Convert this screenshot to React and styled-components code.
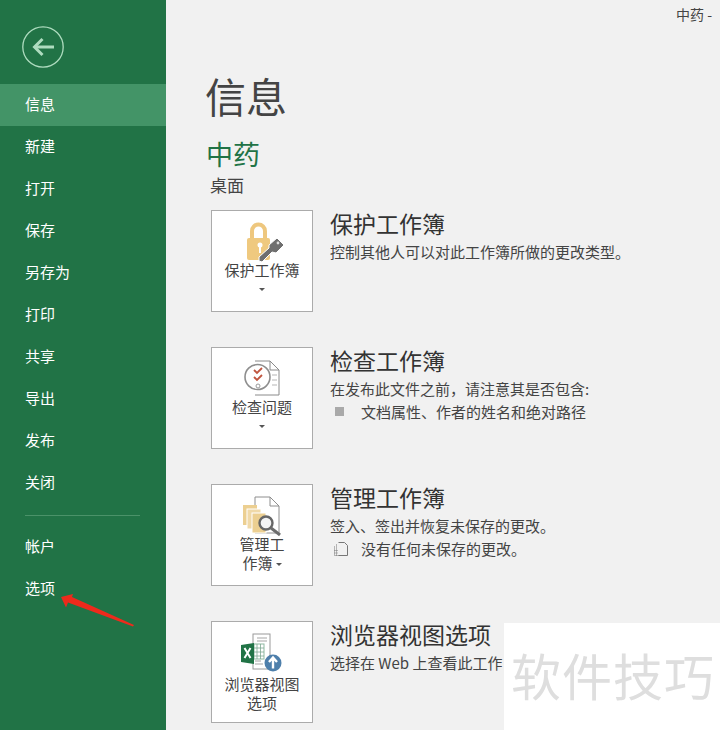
import React from "react";
import styled, { createGlobalStyle } from "styled-components";

const cjk = `"Noto Sans CJK SC", "Noto Sans", sans-serif`;

const GlobalStyle = createGlobalStyle`
  html, body {
    margin: 0;
    padding: 0;
    height: 730px;
    overflow: hidden;
    background: #f1f1f1;
  }
  * {
    box-sizing: border-box;
  }
`;

const Page = styled.div`
  position: relative;
  display: flex;
  width: 720px;
  height: 730px;
  overflow: hidden;
  font-family: ${cjk};
`;

const Sidebar = styled.nav`
  flex: 0 0 166px;
  background: #217346;
  display: flex;
  flex-direction: column;
`;

const BackRow = styled.div`
  height: 84px;
  padding: 26px 0 0 22px;
`;

const MenuItem = styled.div`
  height: 42px;
  padding: 0 0 4px 25px;
  display: flex;
  align-items: center;
  font-size: 15px;
  color: #fff;
  background: ${(props) => (props.$active ? "#439467" : "transparent")};
`;

const Divider = styled.div`
  height: 1px;
  margin: 11px 26px 10px 25px;
  background: #4b9269;
`;

const Main = styled.main`
  flex: 1;
  min-width: 0;
  display: flex;
  flex-direction: column;
  padding-left: 40px;
`;

const WindowTitle = styled.div`
  height: 32px;
  padding: 4px 0 0 470px;
  font-size: 14px;
  line-height: 21px;
  color: #444;
  white-space: nowrap;
`;

const PageTitle = styled.h1`
  margin: 32px 0 0 -1px;
  font-size: 41px;
  line-height: 62px;
  font-weight: 400;
  color: #444;
`;

const DocName = styled.div`
  margin: 9px 0 0;
  font-size: 27px;
  line-height: 38px;
  color: #217346;
`;

const DocPath = styled.div`
  margin: 0 0 0 4px;
  font-size: 17px;
  line-height: 24px;
  color: #444;
`;

const Sections = styled.div`
  margin: 13px 0 0 5px;
  display: flex;
  flex-direction: column;
  gap: 35px;
`;

const Section = styled.section`
  display: flex;
  gap: 17px;
`;

const ActionCard = styled.div`
  flex: 0 0 102px;
  height: 102px;
  background: #fff;
  border: 1px solid #ababab;
  display: flex;
  flex-direction: column;
  align-items: center;
  padding-top: 11px;
`;

const IconSlot = styled.div`
  height: ${(props) => (props.$tall ? "41px" : "38px")};
  display: flex;
  justify-content: center;
  align-items: flex-start;
`;

const CardLabel = styled.div`
  width: 90px;
  text-align: center;
  font-size: 15px;
  line-height: 19px;
  color: #444;
`;

const Caret = styled.span`
  display: ${(props) => (props.$inline ? "inline-block" : "block")};
  width: 0;
  height: 0;
  margin: ${(props) => (props.$inline ? "0 0 3px 3px" : "9px auto 0")};
  border-left: 3px solid transparent;
  border-right: 3px solid transparent;
  border-top: 3px solid #555;
`;

const SectionBody = styled.div`
  flex: 1;
  min-width: 0;
  display: flex;
  flex-direction: column;
`;

const SectionTitle = styled.h2`
  margin: -2px 0 0;
  font-size: 23px;
  line-height: 30px;
  font-weight: 400;
  color: #333;
`;

const SectionText = styled.div`
  font-size: 15px;
  line-height: 22px;
  margin-top: 3px;
  color: #444;
  white-space: nowrap;
`;

const DetailRow = styled.div`
  display: flex;
  align-items: center;
  height: 23px;
  font-size: 15px;
  color: #444;
  white-space: nowrap;
`;

const DetailMark = styled.span`
  flex: 0 0 31px;
  display: flex;
  padding-left: ${(props) => props.$inset}px;
`;

const Bullet = styled.span`
  width: 9px;
  height: 9px;
  background: #a9a9a9;
`;

const Watermark = styled.div`
  position: absolute;
  left: 504px;
  top: 623px;
  width: 216px;
  height: 107px;
  background: #fff;
  padding: 16px 0 0 7px;
  font-size: 50px;
  line-height: 70px;
  letter-spacing: 1px;
  color: #dedede;
  white-space: nowrap;
`;

const RedArrow = styled.svg`
  position: absolute;
  left: 58px;
  top: 590px;
`;

const BackIcon = () => (
  <svg width="42" height="42" viewBox="0 0 42 42" fill="none" stroke="#aedcbf">
    <circle cx="21" cy="21" r="20.2" strokeWidth="1.3" />
    <path d="M32 21H13" strokeWidth="3" />
    <path d="M20.5 13L12.5 21l8 8" strokeWidth="3" />
  </svg>
);

const LockIcon = () => (
  <svg width="46" height="40" viewBox="0 0 46 40">
    <path d="M13 17V9a6.5 6.5 0 0 1 13 0v8" fill="none" stroke="#eec77e" strokeWidth="4" />
    <rect x="8" y="16" width="23" height="22" rx="2" fill="#efc97f" />
    <circle cx="21" cy="23" r="2.5" fill="#fff" />
    <rect x="20" y="24" width="2" height="7" fill="#fff" />
    <path d="M30 23l8-7 7 7-8 8-4-1-10 10-3-1v-4l10-9z" fill="#6f6f6f" stroke="#fff" strokeWidth="1" />
    <circle cx="39" cy="21" r="1.4" fill="#ddd" />
  </svg>
);

const InspectIcon = () => (
  <svg width="36" height="40" viewBox="0 0 36 40" fill="none">
    <path d="M11 2h15l9 9v25H11" fill="#fff" stroke="#8a8a8a" />
    <path d="M26 2v9h9" stroke="#8a8a8a" />
    <path d="M28 16h5M28 21h5M28 26h5" stroke="#b5b5b5" />
    <circle cx="13.5" cy="18" r="12.5" fill="#fff" stroke="#8e8e8e" strokeWidth="1.6" />
    <path d="M10 11l3 3 5-5M10 18l3 3 5-5" stroke="#c0553f" strokeWidth="1.8" />
    <circle cx="14" cy="27" r="2" stroke="#999" />
  </svg>
);

const ManageIcon = () => (
  <svg width="42" height="40" viewBox="0 0 42 40" fill="none">
    <path d="M14 1h15l9 9v27H14z" fill="#fff" stroke="#8e8e8e" />
    <path d="M29 1v9h9" stroke="#8e8e8e" />
    <rect x="2" y="9" width="14" height="20" fill="#eccf91" />
    <rect x="6" y="13" width="14" height="20" fill="#f0d9a8" stroke="#fff" />
    <rect x="11" y="17" width="14" height="20" fill="#eccf91" stroke="#fff" />
    <circle cx="25" cy="27" r="6.5" fill="#f3f3f3" stroke="#666" strokeWidth="2.4" />
    <path d="M30 32l9 7" stroke="#6d6d6d" strokeWidth="3" />
  </svg>
);

const BrowserIcon = () => (
  <svg width="44" height="40" viewBox="0 0 44 40" fill="none">
    <rect x="13" y="1" width="17" height="35" fill="#fff" stroke="#9a9a9a" />
    <path d="M17 5h10M17 8h10M15 31h8M15 28h6" stroke="#a5a5a5" />
    <rect x="14" y="11" width="10" height="15" fill="#fff" stroke="#8fb9a2" />
    <path d="M17 11v15M20.5 11v15M14 15h10M14 19h10M14 23h10" stroke="#7da892" strokeWidth="0.8" />
    <path d="M1 12l13-2v21L1 29z" fill="#217346" />
    <path d="M4.5 15l6 10M10.5 15l-6 10" stroke="#fff" strokeWidth="2" />
    <circle cx="33" cy="30" r="8.5" fill="#4e7fab" />
    <path d="M33 35.500V26M29 29l4-4.500 4 4.500" stroke="#fff" strokeWidth="2.400" />
  </svg>
);

const FilesIcon = () => (
  <svg width="16" height="16" viewBox="0 0 16 16" fill="none" stroke="#777">
    <path d="M5.500 1.500h6l3 3v10h-9" />
    <path d="M1.500 5.500v9h4M3.500 3.500v11M1.500 9.500h4M1.500 12h4" strokeDasharray="1 1" />
  </svg>
);

const menu = ["新建", "打开", "保存", "另存为", "打印", "共享", "导出", "发布", "关闭"];

const sections = [
  {
    title: "保护工作簿",
    icon: <LockIcon />,
    label: "保护工作簿",
    caret: "block",
    text: "控制其他人可以对此工作簿所做的更改类型。",
  },
  {
    title: "检查工作簿",
    icon: <InspectIcon />,
    label: "检查问题",
    caret: "block",
    text: "在发布此文件之前，请注意其是否包含:",
    detail: "文档属性、作者的姓名和绝对路径",
    mark: <Bullet />,
    inset: 5,
  },
  {
    title: "管理工作簿",
    icon: <ManageIcon />,
    label: (
      <>
        管理工
        <br />
        作簿
      </>
    ),
    caret: "inline",
    text: "签入、签出并恢复未保存的更改。",
    detail: "没有任何未保存的更改。",
    mark: <FilesIcon />,
    inset: 3,
  },
  {
    title: "浏览器视图选项",
    icon: <BrowserIcon />,
    tall: true,
    label: (
      <>
        浏览器视图
        <br />
        选项
      </>
    ),
    text: "选择在 Web 上查看此工作",
  },
];

export default function App() {
  return (
    <Page>
      <GlobalStyle />
      <Sidebar>
        <BackRow>
          <BackIcon />
        </BackRow>
        <MenuItem $active>信息</MenuItem>
        {menu.map((item) => (
          <MenuItem key={item}>{item}</MenuItem>
        ))}
        <Divider />
        <MenuItem>帐户</MenuItem>
        <MenuItem>选项</MenuItem>
      </Sidebar>
      <Main>
        <WindowTitle>中药 -</WindowTitle>
        <PageTitle>信息</PageTitle>
        <DocName>中药</DocName>
        <DocPath>桌面</DocPath>
        <Sections>
          {sections.map((s) => (
            <Section key={s.title}>
              <ActionCard>
                <IconSlot $tall={s.tall}>{s.icon}</IconSlot>
                <CardLabel>
                  {s.label}
                  {s.caret === "inline" && <Caret $inline />}
                </CardLabel>
                {s.caret === "block" && <Caret />}
              </ActionCard>
              <SectionBody>
                <SectionTitle>{s.title}</SectionTitle>
                <SectionText>{s.text}</SectionText>
                {s.detail && (
                  <DetailRow>
                    <DetailMark $inset={s.inset}>{s.mark}</DetailMark>
                    {s.detail}
                  </DetailRow>
                )}
              </SectionBody>
            </Section>
          ))}
        </Sections>
      </Main>
      <RedArrow width="80" height="40" viewBox="0 0 80 40">
        <path d="M3 7l12-3-1 3 62 28-1 1.500-65-24-2 5z" fill="#ee2a1c" />
      </RedArrow>
      <Watermark>软件技巧</Watermark>
    </Page>
  );
}
